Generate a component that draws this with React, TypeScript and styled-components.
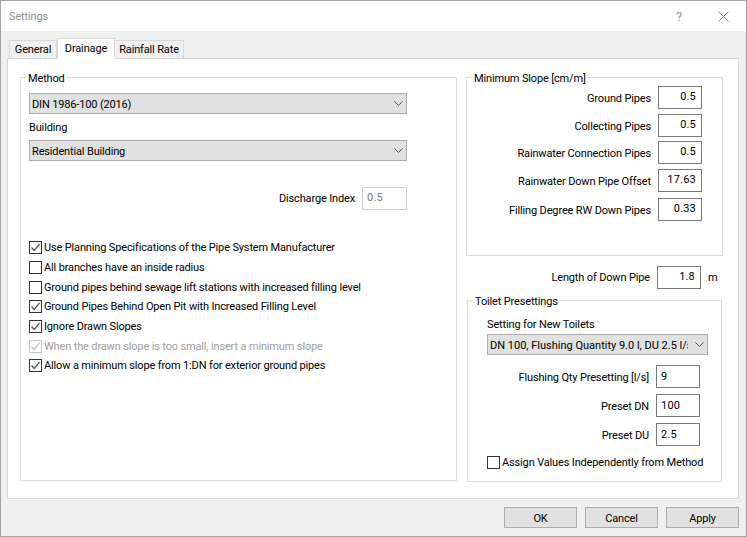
import { createGlobalStyle, styled } from "styled-components";

const GlobalStyle = createGlobalStyle`
  html, body {
    margin: 0;
    padding: 0;
    background: #f0f0f0;
  }
  * {
    box-sizing: border-box;
  }
  body {
    font-family: Roboto, "Liberation Sans", sans-serif;
    font-size: 11px;
    letter-spacing: -0.15px;
    color: #000;
  }
`;

const Window = styled.div`
  width: 747px;
  height: 537px;
  display: flex;
  flex-direction: column;
  border: 1px solid #a3a3a3;
  background: #f0f0f0;
  overflow: hidden;
`;

const TitleBar = styled.div`
  height: 30px;
  flex: none;
  display: flex;
  align-items: center;
  background: #fff;
  padding: 0 17px 0 8px;
  color: #8f8f8f;
`;

const TitleText = styled.span`
  flex: 1;
`;

const HelpMark = styled.span`
  margin-right: 36px;
  color: #9a9a9a;
  font-size: 13px;
`;

const Client = styled.div`
  flex: 1;
  display: flex;
  flex-direction: column;
  padding: 7px 7px 0 6px;
`;

const TabStrip = styled.div`
  display: flex;
  align-items: flex-end;
  height: 21px;
  padding-left: 3px;
  position: relative;
  z-index: 1;
  margin-bottom: -1px;
`;

const Tab = styled.div<{ $active?: boolean; $width: number }>`
  width: ${(p) => p.$width}px;
  height: ${(p) => (p.$active ? 21 : 19)}px;
  display: flex;
  align-items: center;
  justify-content: center;
  background: ${(p) => (p.$active ? "#fff" : "#f0f0f0")};
  border: 1px solid #d9d9d9;
  border-bottom: ${(p) => (p.$active ? "none" : "1px solid #d9d9d9")};
  margin-left: ${(p) => (p.$active ? 0 : -1)}px;
  padding-bottom: 1px;
`;

const Pane = styled.div`
  height: 441px;
  display: flex;
  gap: 9px;
  background: #fff;
  border: 1px solid #d9d9d9;
  padding: 18px 14px 0 12px;
`;

const Group = styled.div<{ $height: number; $pad?: string }>`
  position: relative;
  height: ${(p) => p.$height}px;
  border: 1px solid #dcdcdc;
  padding: ${(p) => p.$pad ?? "0"};
`;

const Legend = styled.span`
  position: absolute;
  top: -7px;
  left: 5px;
  padding: 0 2px;
  background: #fff;
  line-height: 15px;
`;

const LeftGroup = styled(Group)`
  width: 437px;
`;

const RightColumn = styled.div`
  width: 257px;
  display: flex;
  flex-direction: column;
`;

const Combo = styled.div<{ $width: number }>`
  width: ${(p) => p.$width}px;
  height: 21px;
  display: flex;
  align-items: center;
  justify-content: space-between;
  background: #e1e1e1;
  border: 1px solid #adadad;
  padding: 0 3px 0 2px;
  overflow: hidden;
  white-space: nowrap;
`;

const ComboText = styled.span`
  overflow: hidden;
  flex: 1;
  min-width: 0;
  padding-top: 1px;
`;

const ClippedComboText = styled(ComboText)`
  letter-spacing: 0;
`;

const Chevron = styled.svg`
  width: 9px;
  height: 5px;
  flex: none;
  margin-left: 7px;
`;

const FieldCaption = styled.div<{ $height?: number; $lift?: number }>`
  height: ${(p) => p.$height ?? 26}px;
  padding-bottom: ${(p) => p.$lift ?? 0}px;
  display: flex;
  align-items: center;
`;

const Row = styled.div<{ $width?: number }>`
  display: flex;
  align-items: center;
  justify-content: flex-end;
  gap: 7px;
  width: ${(p) => (p.$width ? `${p.$width}px` : "auto")};
  height: 23px;
  flex: none;
`;

const RowLabel = styled.span`
  padding-top: 2px;
`;

const NumberField = styled.input<{ $width?: number; $align?: string; $muted?: boolean; $low?: boolean }>`
  width: ${(p) => p.$width ?? 44}px;
  height: 23px;
  flex: none;
  border: 1px solid ${(p) => (p.$muted ? "#cfcfcf" : "#7a7a7a")};
  background: #fff;
  color: ${(p) => (p.$muted ? "#7d7d7d" : "#000")};
  font: inherit;
  letter-spacing: 0.2px;
  padding: 0 5px ${(p) => (p.$low ? 0 : 3)}px 4px;
  text-align: ${(p) => p.$align ?? "right"};
  outline: none;
  border-radius: 0;
`;

const ChecksList = styled.div`
  display: flex;
  flex-direction: column;
  margin-top: 28px;
`;

const CheckRow = styled.div<{ $disabled?: boolean }>`
  display: flex;
  align-items: center;
  gap: 2px;
  height: 19.7px;
  white-space: nowrap;
  color: ${(p) => (p.$disabled ? "#9e9e9e" : "#000")};
`;

const CheckBox = styled.span<{ $disabled?: boolean }>`
  width: 13px;
  height: 13px;
  flex: none;
  display: flex;
  border: 1px solid ${(p) => (p.$disabled ? "#c4c4c4" : "#333")};
  background: #fff;
  color: ${(p) => (p.$disabled ? "#c4c4c4" : "#555")};
`;

const Stack = styled.div<{ $gap?: number; $top?: number }>`
  display: flex;
  flex-direction: column;
  gap: ${(p) => p.$gap ?? 0}px;
  margin-top: ${(p) => p.$top ?? 0}px;
`;

const Unit = styled.span`
  width: 11px;
  margin-right: 4px;
`;

const ToiletGroup = styled(Group)`
  margin: 11px 1px 0;
  width: 255px;
`;

const Footer = styled.div`
  display: flex;
  justify-content: flex-end;
  gap: 8px;
  margin-top: 8px;
`;

const Button = styled.button`
  width: 73px;
  height: 21px;
  padding: 1px 0 0;
  background: #e1e1e1;
  border: 1px solid #adadad;
  border-radius: 0;
  font: inherit;
  letter-spacing: inherit;
  color: #000;
`;

const Caret = () => (
  <Chevron viewBox="0 0 9 5">
    <path d="M0.4 0.4 L4.5 4.4 L8.6 0.4" fill="none" stroke="#555" strokeWidth="1" />
  </Chevron>
);

const Check = ({ checked, disabled, label }: { checked?: boolean; disabled?: boolean; label: string }) => (
  <CheckRow $disabled={disabled}>
    <CheckBox $disabled={disabled}>
      {checked && (
        <svg viewBox="0 0 11 11" width="11" height="11">
          <path d="M1.5 5.5 L4.2 8.5 L9.6 1.8" fill="none" stroke="currentColor" strokeWidth="1.3" />
        </svg>
      )}
    </CheckBox>
    <span>{label}</span>
  </CheckRow>
);

const slopes = [
  { label: "Ground Pipes", value: "0.5", top: 0 },
  { label: "Collecting Pipes", value: "0.5", top: 5 },
  { label: "Rainwater Connection Pipes", value: "0.5", top: 4 },
  { label: "Rainwater Down Pipe Offset", value: "17.63", top: 5 },
  { label: "Filling Degree RW Down Pipes", value: "0.33", top: 6 },
];

const presets = [
  { label: "Flushing Qty Presetting [l/s]", value: "9" },
  { label: "Preset DN", value: "100" },
  { label: "Preset DU", value: "2.5" },
];

const checks = [
  { label: "Use Planning Specifications of the Pipe System Manufacturer", checked: true },
  { label: "All branches have an inside radius" },
  { label: "Ground pipes behind sewage lift stations with increased filling level" },
  { label: "Ground Pipes Behind Open Pit with Increased Filling Level", checked: true },
  { label: "Ignore Drawn Slopes", checked: true },
  { label: "When the drawn slope is too small, insert a minimum slope", checked: true, disabled: true },
  { label: "Allow a minimum slope from 1:DN for exterior ground pipes", checked: true },
];

export default function App() {
  return (
    <>
      <GlobalStyle />
      <Window>
        <TitleBar>
          <TitleText>Settings</TitleText>
          <HelpMark>?</HelpMark>
          <svg width="11" height="11" viewBox="0 0 11 11">
            <path d="M0.5 0.5 L10.5 10.5 M10.5 0.5 L0.5 10.5" stroke="#8a8a8a" strokeWidth="1" fill="none" />
          </svg>
        </TitleBar>
        <Client>
          <TabStrip>
            <Tab $width={48}>General</Tab>
            <Tab $width={58} $active>Drainage</Tab>
            <Tab $width={70}>Rainfall Rate</Tab>
          </TabStrip>
          <Pane>
            <LeftGroup $height={404} $pad="15px 0 0 8px">
              <Legend>Method</Legend>
              <Combo $width={378}>
                <ComboText>DIN 1986-100 (2016)</ComboText>
                <Caret />
              </Combo>
              <FieldCaption>Building</FieldCaption>
              <Combo $width={378}>
                <ComboText>Residential Building</ComboText>
                <Caret />
              </Combo>
              <Stack $top={26}>
                <Row $width={378}>
                  <span>Discharge Index</span>
                  <NumberField readOnly value="0.5" $width={45} $align="left" $muted />
                </Row>
              </Stack>
              <ChecksList>
                {checks.map((c) => (
                  <Check key={c.label} {...c} />
                ))}
              </ChecksList>
            </LeftGroup>
            <RightColumn>
              <Group $height={179} $pad="8px 20px 0 0">
                <Legend>Minimum Slope [cm/m]</Legend>
                <Stack>
                  {slopes.map((s) => (
                    <Stack key={s.label} $top={s.top}>
                      <Row>
                        <RowLabel>{s.label}</RowLabel>
                        <NumberField readOnly value={s.value} />
                      </Row>
                    </Stack>
                  ))}
                </Stack>
              </Group>
              <Stack $top={10}>
                <Row>
                  <span>Length of Down Pipe</span>
                  <NumberField readOnly value="1.8" />
                  <Unit>m</Unit>
                </Row>
              </Stack>
              <ToiletGroup $height={182} $pad="15px 21px 0 19px">
                <Legend>Toilet Presettings</Legend>
                <FieldCaption $height={18} $lift={2}>Setting for New Toilets</FieldCaption>
                <Combo $width={221}>
                  <ClippedComboText>DN 100, Flushing Quantity 9.0 l, DU 2.5 l/s</ClippedComboText>
                  <Caret />
                </Combo>
                <Stack $gap={6} $top={10}>
                  {presets.map((p) => (
                    <Row key={p.label}>
                      <RowLabel>{p.label}</RowLabel>
                      <NumberField readOnly value={p.value} $align="left" $low />
                    </Row>
                  ))}
                </Stack>
                <Stack $top={7}>
                  <Check label="Assign Values Independently from Method" />
                </Stack>
              </ToiletGroup>
            </RightColumn>
          </Pane>
          <Footer>
            <Button>OK</Button>
            <Button>Cancel</Button>
            <Button>Apply</Button>
          </Footer>
        </Client>
      </Window>
    </>
  );
}
